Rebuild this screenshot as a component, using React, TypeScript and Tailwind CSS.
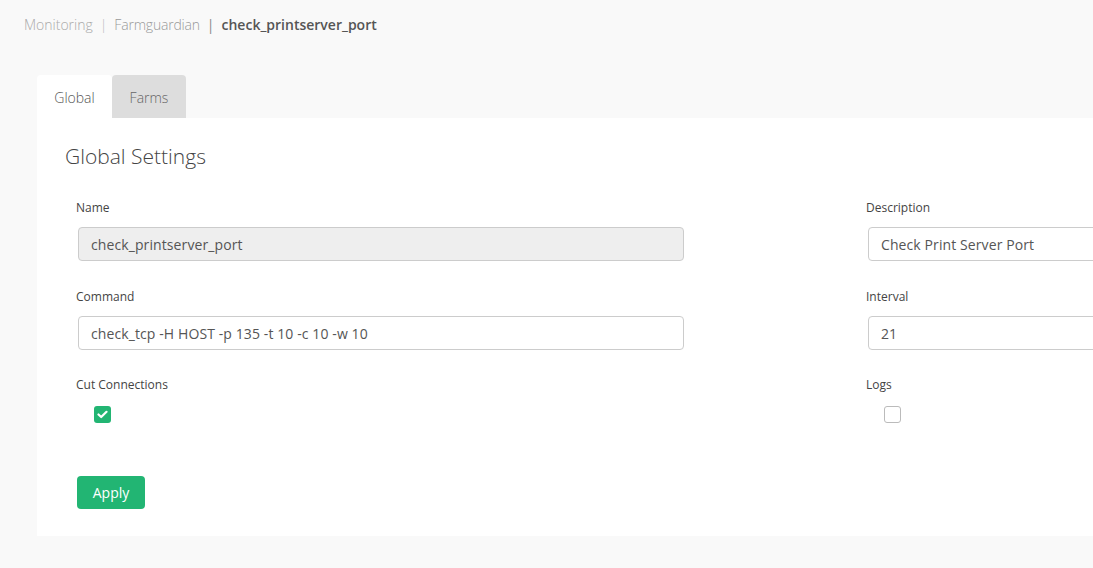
import React from 'react';

const font = { fontFamily: '"Open Sans", "Liberation Sans", sans-serif' };

const Field: React.FC<{ label: string; value: string; readOnly?: boolean }> = ({ label, value, readOnly }) => (
  <div className="flex flex-col">
    <label className="text-[12px] leading-[17px] text-[#444]">{label}</label>
    <div
      className={`mt-[11px] ml-[2px] h-[34px] w-[606px] rounded-[4px] border border-[#ccc] px-3 flex items-center text-[14px] tracking-[0.1px] text-[#555] ${
        readOnly ? 'bg-[#eeeeee]' : 'bg-white'
      }`}
    >
      {value}
    </div>
  </div>
);

const Check: React.FC<{ label: string; checked?: boolean }> = ({ label, checked }) => (
  <div className="flex flex-col">
    <label className="text-[12px] leading-[17px] text-[#444]">{label}</label>
    <div className="mt-[13px] ml-[18px]">
      {checked ? (
        <div className="w-[17px] h-[17px] rounded-[3px] bg-[#22b573] flex items-center justify-center">
          <svg width="11" height="9" viewBox="0 0 11 9" fill="none">
            <path d="M1.5 4.5 L4.2 7 L9.5 1.8" stroke="white" strokeWidth="2.2" strokeLinecap="round" strokeLinejoin="round" />
          </svg>
        </div>
      ) : (
        <div className="w-[17px] h-[17px] rounded-[3px] border border-[#bbb] bg-white" />
      )}
    </div>
  </div>
);

export default function App() {
  return (
    <div className="w-[1093px] h-[568px] overflow-hidden bg-[#f9f9f9]" style={font}>
      <div className="pl-[24px] pt-[15px] text-[14px] leading-[20px] flex items-center">
        <span className="font-light text-[#aaa]">Monitoring</span>
        <span className="mx-[7px] text-[#bbb] font-light">|</span>
        <span className="font-light text-[#999] tracking-[-0.2px]">Farmguardian</span>
        <span className="mx-[7px] text-[#888]">|</span>
        <span className="font-semibold text-[#555]">check_printserver_port</span>
      </div>

      <div className="ml-[37px] mt-[40px] flex">
        <div className="w-[75px] h-[43px] pt-[1px] bg-white rounded-t-[4px] flex items-center justify-center text-[14px] font-light text-[#555]">
          Global
        </div>
        <div className="w-[74px] h-[43px] pt-[1px] bg-[#dddddd] rounded-t-[4px] flex items-center justify-center text-[14px] font-light text-[#666]">
          Farms
        </div>
      </div>

      <div className="ml-[37px] w-[1100px] h-[418px] bg-white pl-[28px] pt-[23px]">
        <h2 className="text-[21px] leading-[30px] font-light text-[#444]">Global Settings</h2>
        <div className="ml-[11px] mt-[28px] grid grid-cols-[608px_608px] gap-x-[182px]">
          <Field label="Name" value="check_printserver_port" readOnly />
          <Field label="Description" value="Check Print Server Port" />
          <div className="mt-[27px]">
            <Field label="Command" value="check_tcp -H HOST -p 135 -t 10 -c 10 -w 10" />
          </div>
          <div className="mt-[27px]">
            <Field label="Interval" value="21" />
          </div>
          <div className="mt-[26px]">
            <Check label="Cut Connections" checked />
          </div>
          <div className="mt-[26px]">
            <Check label="Logs" />
          </div>
        </div>
        <button className="ml-[12px] mt-[53px] w-[68px] h-[33px] rounded-[4px] bg-[#22b573] text-white text-[14px] flex items-center justify-center">
          Apply
        </button>
      </div>
    </div>
  );
}
